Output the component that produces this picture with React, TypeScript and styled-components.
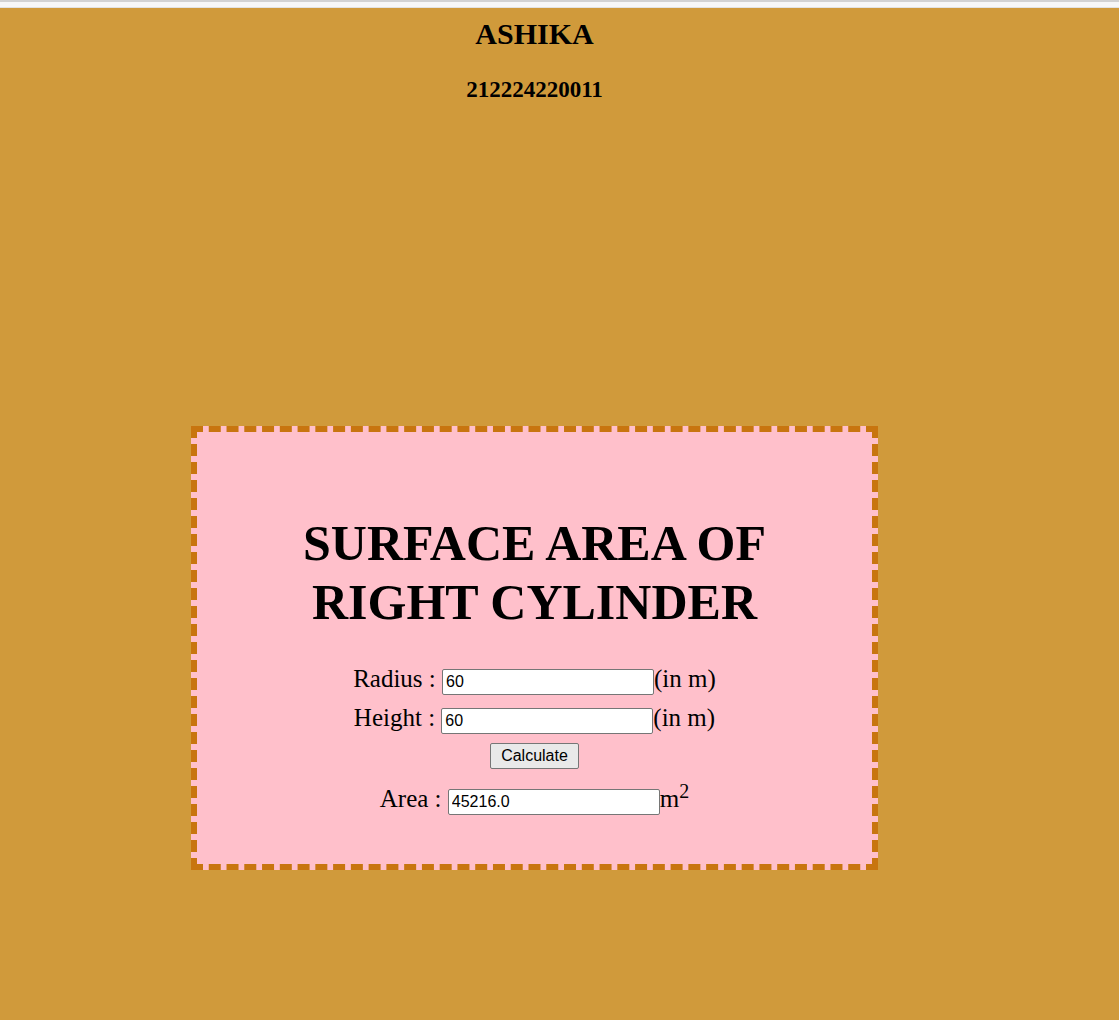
import styled, { createGlobalStyle } from 'styled-components'

const GlobalStyle = createGlobalStyle`
	html, body {
		margin: 0;
		padding: 0;
		background: #f7f7f7;
	}
	body {
		font-family: 'Liberation Serif', 'Times New Roman', serif;
		color: #000;
	}
`

const TopStrip = styled.div`
	height: 5px;
	border-top: 2px solid #d2d2d2;
	border-bottom: 1px solid #e2e2e2;
	background: #f7f7f7;
`

const Page = styled.div`
	width: 1119px;
	min-height: 1012px;
	background: #d09a3b;
	padding-top: 9px;
	box-sizing: border-box;
	overflow: hidden;
`

const Content = styled.div`
	width: 1069px;
	text-align: center;
`

const Name = styled.h1`
	margin: 0;
	font-size: 30px;
	line-height: 34px;
	font-weight: bold;
`

const RegNo = styled.h2`
	margin: 26px 0 0;
	font-size: 23px;
	line-height: 26px;
	font-weight: bold;
`

const Card = styled.div`
	width: 687px;
	height: 444px;
	box-sizing: border-box;
	margin: 323px auto 0;
	padding-top: 82px;
	background: pink;
	border: 6px dashed #c8750f;
`

const Title = styled.h1`
	margin: 0;
	font-size: 50px;
	line-height: 59px;
	font-weight: bold;
`

const Form = styled.form`
	margin-top: 27px;
`

const Row = styled.div<{ $gap?: number }>`
	margin-top: ${p => p.$gap ?? 0}px;
	font-size: 25px;
	line-height: 39px;
	white-space: nowrap;
`

const Field = styled.input`
	box-sizing: border-box;
	width: 212px;
	height: 26px;
	padding: 0 3px;
	border: 1px solid #767676;
	border-radius: 2px;
	background: #fff;
	font-family: 'Liberation Sans', Arial, sans-serif;
	font-size: 16px;
	color: #000;
	vertical-align: baseline;
	outline: none;
`

const ButtonRow = styled.div`
	margin-top: 6px;
	display: flex;
	justify-content: center;
`

const Button = styled.button`
	box-sizing: border-box;
	height: 26px;
	padding: 1px 10px;
	border: 1px solid #767676;
	border-radius: 2px;
	background: #e9e9e9;
	font-family: 'Liberation Sans', Arial, sans-serif;
	font-size: 16px;
	color: #000;
`

const Sup = styled.sup`
	font-size: 20px;
	line-height: 0;
`

const App = () => {
	return (
		<>
			<GlobalStyle />
			<TopStrip />
			<Page>
				<Content>
					<Name>ASHIKA</Name>
					<RegNo>212224220011</RegNo>
					<Card>
						<Title>
							SURFACE AREA OF
							<br />
							RIGHT CYLINDER
						</Title>
						<Form onSubmit={e => e.preventDefault()}>
							<Row>
								Radius : <Field type='text' defaultValue='60' />(in m)
							</Row>
							<Row>
								Height : <Field type='text' defaultValue='60' />(in m)
							</Row>
							<ButtonRow>
								<Button type='button'>Calculate</Button>
							</ButtonRow>
							<Row $gap={10}>
								Area : <Field type='text' defaultValue='45216.0' readOnly />m<Sup>2</Sup>
							</Row>
						</Form>
					</Card>
				</Content>
			</Page>
		</>
	)
}

export default App
